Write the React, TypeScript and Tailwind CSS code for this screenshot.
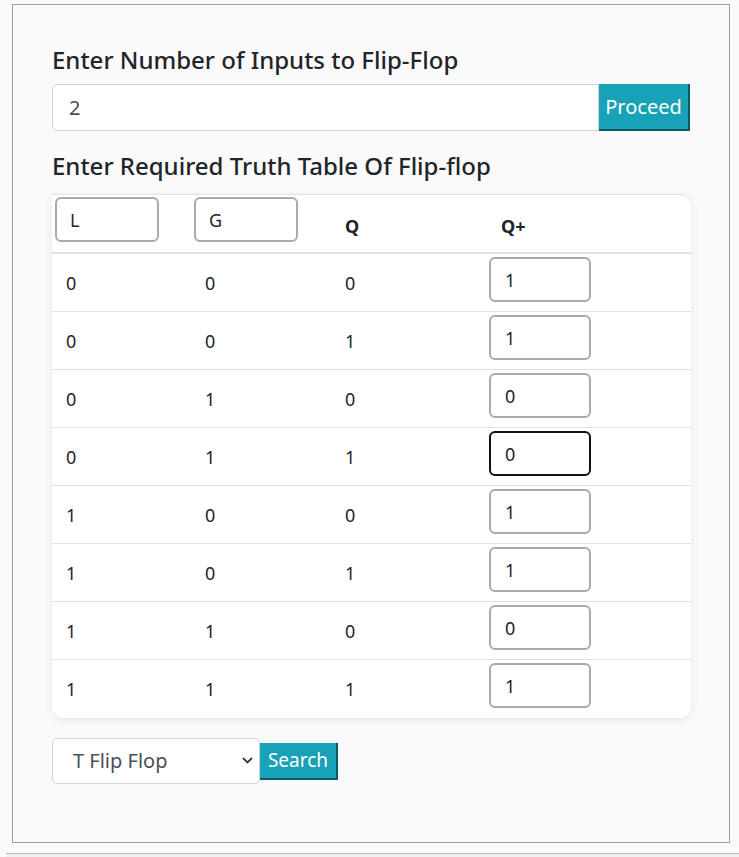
import { useState } from "react";

const ROWS: [string, string, string, string][] = [
  ["0", "0", "0", "1"],
  ["0", "0", "1", "1"],
  ["0", "1", "0", "0"],
  ["0", "1", "1", "0"],
  ["1", "0", "0", "1"],
  ["1", "0", "1", "1"],
  ["1", "1", "0", "0"],
  ["1", "1", "1", "1"],
];

const COLS = "grid grid-cols-[139px_142px_144px_214px]";

export default function App() {
  const [count, setCount] = useState("2");
  const [labels, setLabels] = useState(["L", "G"]);
  const [outputs, setOutputs] = useState(ROWS.map((r) => r[3]));

  return (
    <div className="min-h-[857px] bg-[#fafafa] pt-[4px] font-['Noto_Sans',sans-serif] text-[#212529]">
      <div className="ml-[12px] w-[718px] h-[839px] border border-[#a0a0a0] bg-[#fafafa] px-[39px] pt-[39px]">
        <h4 className="text-[24px] font-medium leading-[32px] mb-[8px]">
          Enter Number of Inputs to Flip-Flop
        </h4>
        <div className="flex h-[47px]">
          <input
            value={count}
            onChange={(e) => setCount(e.target.value)}
            className="flex-1 bg-white border border-[#ced4da] rounded-l-[5px] px-[16px] text-[20px] text-[#495057] outline-none"
          />
          <button className="w-[91px] bg-[#17a2b8] text-white text-[20px] border-r-2 border-b-2 border-[#0c5964]">
            Proceed
          </button>
        </div>

        <h4 className="text-[24px] font-medium leading-[32px] mt-[19px] mb-[12px]">
          Enter Required Truth Table Of Flip-flop
        </h4>

        <div className="w-[639px] bg-white border-t border-[#dee2e6] rounded-tr-[12px] rounded-b-[12px] shadow-[0_2px_8px_rgba(0,0,0,0.08)] text-[18px]">
          <div className={`${COLS} h-[59px] border-b-2 border-[#dee2e6]`}>
            {labels.map((l, i) => (
              <div key={i} className="pl-[3px] pt-[2px]">
                <input
                  value={l}
                  onChange={(e) =>
                    setLabels(labels.map((x, j) => (j === i ? e.target.value : x)))
                  }
                  className="w-[104px] h-[45px] border-2 border-[#aaaaaa] rounded-[6px] px-[13px] text-[18px] outline-none"
                />
              </div>
            ))}
            <div className="pl-[12px] pt-[18px] font-bold">Q</div>
            <div className="pl-[24px] pt-[18px] font-bold">Q+</div>
          </div>
          {ROWS.map((r, i) => (
            <div
              key={i}
              className={`${COLS} h-[58px] ${i < ROWS.length - 1 ? "border-b border-[#dee2e6]" : ""}`}
            >
              <div className="pl-[14px] pt-[16px]">{r[0]}</div>
              <div className="pl-[14px] pt-[16px]">{r[1]}</div>
              <div className="pl-[12px] pt-[16px]">{r[2]}</div>
              <div className="pl-[12px] pt-[3px]">
                <input
                  value={outputs[i]}
                  onChange={(e) =>
                    setOutputs(outputs.map((x, j) => (j === i ? e.target.value : x)))
                  }
                  className={`w-[102px] h-[45px] border-2 rounded-[6px] px-[14px] text-[18px] outline-none ${
                    i === 3 ? "border-[#111111]" : "border-[#aaaaaa]"
                  }`}
                />
              </div>
            </div>
          ))}
        </div>

        <div className="flex items-center mt-[20px]">
          <div className="relative w-[208px] h-[46px]">
            <select className="appearance-none w-full h-full bg-white border border-[#ced4da] rounded-[5px] pl-[20px] text-[20px] text-[#495057] outline-none">
              <option>T Flip Flop</option>
              <option>D Flip Flop</option>
              <option>JK Flip Flop</option>
              <option>SR Flip Flop</option>
            </select>
            <svg
              className="absolute right-[6px] top-[17px] pointer-events-none"
              width="13"
              height="10"
              viewBox="0 0 13 10"
            >
              <path d="M2 3l4.5 4.5 4.5-4.5" fill="none" stroke="#343a40" strokeWidth="1.8" />
            </svg>
          </div>
          <button className="h-[37px] w-[78px] bg-[#17a2b8] text-white text-[19px] border-r-2 border-b-2 border-[#0c5964]">
            Search
          </button>
        </div>
      </div>
      <div className="mt-[10px] h-[4px] border-t border-[#bbbbbb] bg-[#f0f0f0] ml-[6px]" />
    </div>
  );
}
